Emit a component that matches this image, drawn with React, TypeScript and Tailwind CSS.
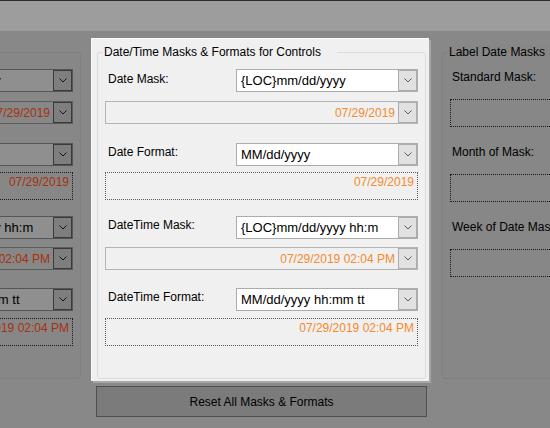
import React from 'react'

type Theme = {
  group: string
  title: string
  field: string
  shown: string
  dotted: string
  button: string
  preview: string
}

// normal colours for the focused panel
const LIGHT: Theme = {
  group: 'border-[#d5dce3] bg-[#f0f0f0]',
  title: 'bg-[#f0f0f0]',
  field: 'bg-white border-[#acacac]',
  shown: 'bg-[#f0f0f0] border-[#b4b4b4]',
  dotted: 'border-[#5c5c5c]',
  button: 'bg-[#e1e1e1] border-[#adadad] text-[#5a5a5a]',
  preview: 'text-[#f68a2d]',
}

// same controls behind the grey overlay
const DIM: Theme = {
  group: 'border-[#7a8189] bg-[#878787]',
  title: 'bg-[#878787]',
  field: 'bg-[#8f8f8f] border-[#555555]',
  shown: 'bg-[#878787] border-[#5c5c5c]',
  dotted: 'border-[#1a1a1a]',
  button: 'bg-[#7e7e7e] border-[#3a3a3a] text-[#141414]',
  preview: 'text-[#a8300c]',
}

type Row = {
  label: string
  value: string
  preview: string
  kind: 'combo' | 'label'
  top: string
  gap: string
  pad: string
}

const ROWS: Row[] = [
  { label: 'Date Mask:', value: '{LOC}mm/dd/yyyy', preview: '07/29/2019', kind: 'combo', top: 'mt-[16px]', gap: 'mt-[9px]', pad: 'pt-[3px]' },
  { label: 'Date Format:', value: 'MM/dd/yyyy', preview: '07/29/2019', kind: 'label', top: 'mt-[19px]', gap: 'mt-[6px]', pad: 'pt-[2px]' },
  { label: 'DateTime Mask:', value: '{LOC}mm/dd/yyyy hh:m', preview: '07/29/2019 02:04 PM', kind: 'combo', top: 'mt-[16px]', gap: 'mt-[8px]', pad: 'pt-[2px]' },
  { label: 'DateTime Format:', value: 'MM/dd/yyyy hh:mm tt', preview: '07/29/2019 02:04 PM', kind: 'label', top: 'mt-[18px]', gap: 'mt-[7px]', pad: 'pt-[2px]' },
]

function DropButton({ t }: { t: Theme }) {
  return (
    <div className={`w-[19px] shrink-0 flex items-center justify-center border ${t.button}`}>
      <svg width="8" height="5" viewBox="0 0 8 5" fill="none">
        <polyline points="0.5,0.5 4,4 7.5,0.5" stroke="currentColor" strokeWidth="1" />
      </svg>
    </div>
  )
}

function Combo({ value, t }: { value: string; t: Theme }) {
  return (
    <div className={`w-[182px] h-[23px] flex border ${t.field}`}>
      <span className="flex-1 min-w-0 overflow-hidden whitespace-nowrap pl-[4px] text-[13px] leading-[21px]">{value}</span>
      <DropButton t={t} />
    </div>
  )
}

function MaskGroup({ t }: { t: Theme }) {
  return (
    <div className={`relative w-[329px] h-[327px] rounded-[3px] border px-[7px] ${t.group}`}>
      <span className={`absolute -top-[8px] left-[5px] pl-[1px] pr-[16px] whitespace-nowrap ${t.title}`}>
        Date/Time Masks &amp; Formats for Controls
      </span>
      {ROWS.map(r => (
        <div key={r.label}>
          <div className={`flex justify-between ${r.top}`}>
            <span className={`ml-[3px] ${r.pad}`}>{r.label}</span>
            <Combo value={r.value} t={t} />
          </div>
          {r.kind === 'combo' ? (
            <div className={`h-[23px] flex border ${r.gap} ${t.shown}`}>
              <span className={`flex-1 text-right pr-[3px] pt-[4px] whitespace-nowrap ${t.preview}`}>{r.preview}</span>
              <DropButton t={t} />
            </div>
          ) : (
            <div className={`h-[28px] border border-dotted text-right pr-[3px] pt-[2px] whitespace-nowrap ${r.gap} ${t.dotted} ${t.preview}`}>
              {r.preview}
            </div>
          )}
        </div>
      ))}
    </div>
  )
}

function LabelGroup() {
  const items = [
    { label: 'Standard Mask:', top: 'mt-[17px]' },
    { label: 'Month of Mask:', top: 'mt-[18px]' },
    { label: 'Week of Date Mask:', top: 'mt-[18px]' },
  ]
  return (
    <div className={`relative w-[300px] h-[327px] rounded-[3px] border px-[7px] ${DIM.group}`}>
      <span className={`absolute -top-[8px] left-[5px] pl-[1px] pr-[16px] whitespace-nowrap ${DIM.title}`}>
        Label Date Masks
      </span>
      {items.map(it => (
        <div key={it.label}>
          <div className={`pl-[2px] whitespace-nowrap ${it.top}`}>{it.label}</div>
          <div className={`mt-[15px] h-[28px] border border-dotted ${DIM.dotted}`} />
        </div>
      ))}
    </div>
  )
}

export default function App() {
  return (
    <div className="w-[550px] h-[428px] overflow-hidden flex flex-col bg-[#888888] text-[12px] leading-[14px] text-black font-['Liberation_Sans',Arial,sans-serif]">
      <div className="h-[31px] shrink-0 border-t border-[#2b2b2b] bg-[#9d9d9d]" />

      <div className="flex flex-1 min-h-0">
        {/* left group, dimmed and cut off */}
        <div className="w-[91px] shrink-0 overflow-hidden pt-[21px]">
          <div className="-ml-[248px]">
            <MaskGroup t={DIM} />
          </div>
        </div>

        {/* focused panel */}
        <div className="w-[340px] shrink-0 pt-[7px]">
          <div className="w-[338px] h-[343px] bg-[#f0f0f0] border-l border-t border-[#fbfbfb] shadow-[2px_2px_0_#a7a7a7] pl-[5px] pt-[13px]">
            <MaskGroup t={LIGHT} />
          </div>
          <button className="mt-[5px] ml-[5px] w-[331px] h-[31px] flex items-center justify-center border border-[#4f4f4f] bg-[#7b7b7b]">
            Reset All Masks &amp; Formats
          </button>
        </div>

        {/* right group, dimmed */}
        <div className="flex-1 min-w-0 overflow-hidden pt-[21px] pl-[11px]">
          <LabelGroup />
        </div>
      </div>
    </div>
  )
}
